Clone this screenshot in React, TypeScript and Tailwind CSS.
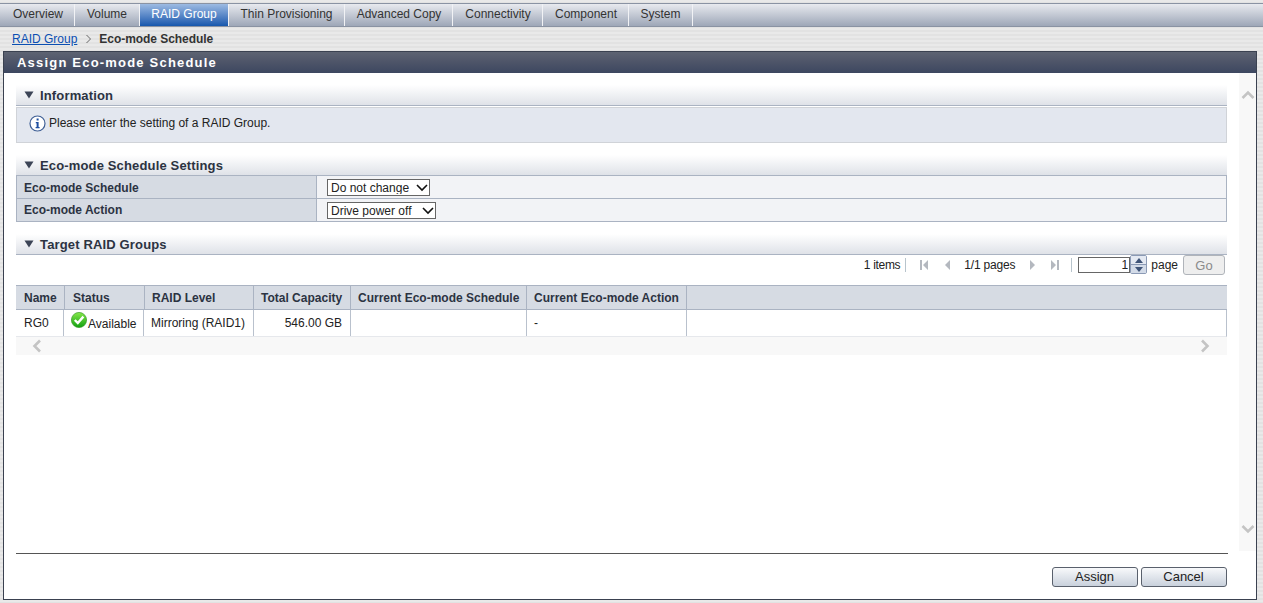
const tabs = [
  { label: 'Overview', width: 'w-[75px] pl-[2px]' },
  { label: 'Volume', width: 'w-[65px]' },
  { label: 'RAID Group', width: 'w-[89px]', active: true },
  { label: 'Thin Provisioning', width: 'w-[116px]' },
  { label: 'Advanced Copy', width: 'w-[108px] pl-[1px]' },
  { label: 'Connectivity', width: 'w-[90px] pl-[1px]' },
  { label: 'Component', width: 'w-[86px] pl-[1px]' },
  { label: 'System', width: 'w-[64px]' },
];

function SectionHeader({ title }: { title: string }) {
  return (
    <div className="flex h-[21px] items-center gap-[6px] border-b border-[#aab3c2] bg-gradient-to-b from-white to-[#dfe2e8] pl-[8px] pt-[1px]">
      <svg width="10" height="8" viewBox="0 0 10 8" className="mt-[-1px]">
        <path d="M0.5 0.5h9L5 7.5z" fill="#3c4456" />
      </svg>
      <span className="text-[13px] font-bold tracking-[0.15px] text-[#2c3342]">{title}</span>
    </div>
  );
}

function InfoIcon() {
  return (
    <svg width="17" height="17" viewBox="0 0 17 17">
      <circle cx="8.5" cy="8.5" r="7.5" fill="#fff" stroke="#3f5f95" strokeWidth="1.2" />
      <rect x="7.6" y="3.5" width="2" height="2" fill="#1f4fa0" />
      <path d="M6.8 7h2.8v5h1v1.2H6.6V12h1V8.2h-.8z" fill="#1f4fa0" />
    </svg>
  );
}

function CheckBadge() {
  return (
    <svg width="16" height="16" viewBox="0 0 16 16" className="mt-[-6px] shrink-0">
      <defs>
        <linearGradient id="ok" x1="0" y1="0" x2="0" y2="1">
          <stop offset="0" stopColor="#86e84a" />
          <stop offset="1" stopColor="#10a010" />
        </linearGradient>
      </defs>
      <circle cx="8" cy="8" r="7.6" fill="url(#ok)" stroke="#3a9a2a" strokeWidth="0.7" />
      <path d="M3.8 8l3 3 5.6-6.4" fill="none" stroke="#fff" strokeWidth="2.4" />
    </svg>
  );
}

function PagerIcon({ d }: { d: string }) {
  return (
    <svg width="10" height="10" viewBox="0 0 10 10">
      <path d={d} fill="#b4b8bf" />
    </svg>
  );
}

function Chevron({ d }: { d: string }) {
  return (
    <svg width="14" height="14" viewBox="0 0 14 14">
      <path d={d} fill="none" stroke="#c4c4c4" strokeWidth="2.6" />
    </svg>
  );
}

function SelectBox({ value, width }: { value: string; width: string }) {
  return (
    <div className={`relative h-[17px] ${width}`}>
      <select className="h-full w-full appearance-none border border-[#666] bg-white pl-[3px] text-[12px] leading-none text-[#222]">
        <option>{value}</option>
      </select>
      <svg width="12" height="8" viewBox="0 0 12 8" className="pointer-events-none absolute right-[2px] top-[5px]">
        <path d="M1 1l5 5 5-5" fill="none" stroke="#111" strokeWidth="1.6" />
      </svg>
    </div>
  );
}

function FooterButton({ label }: { label: string }) {
  return (
    <button className="h-[20px] w-[86px] rounded-[3px] border border-[#59606c] bg-gradient-to-b from-[#f8f9fb] to-[#c9d1dc] pb-[1px] pr-[1px] text-[13px] leading-none text-[#222]">
      {label}
    </button>
  );
}

const headCell = 'flex items-center whitespace-nowrap border-r border-[#aab3c2] font-bold text-[#2c3342]';
const bodyCell = 'flex items-center whitespace-nowrap border-r border-[#b9c1cd] text-[#222]';
const labelCell = 'flex w-[300px] items-center border-r border-[#aab3c2] bg-[#d6dbe3] pl-[7px] font-bold text-[#2c3342]';

export default function App() {
  return (
    <div className="flex h-[603px] w-[1263px] flex-col overflow-hidden bg-[repeating-linear-gradient(to_bottom,#e9e9e9_0px,#e9e9e9_2px,#e2e2e2_2px,#e2e2e2_4px)] font-['Liberation_Sans',Arial,sans-serif] text-[12px]">
      {/* tabs */}
      <div className="mt-[3px] flex h-[24px] border-y border-[#8a93a3] bg-gradient-to-b from-[#e8eaef] to-[#9ea7b8]">
        {tabs.map((tab) => (
          <div
            key={tab.label}
            className={`flex items-center justify-center border-r border-[#f1f2f5] pb-[2px] ${tab.width} ${
              tab.active
                ? 'bg-gradient-to-b from-[#9dbbe2] to-[#1557ad] text-white'
                : 'text-[#333]'
            }`}
          >
            {tab.label}
          </div>
        ))}
      </div>

      {/* breadcrumb */}
      <div className="flex h-[24px] items-center pb-[1px] pl-[12px]">
        <span className="text-[#0b4fb3] underline">RAID Group</span>
        <svg width="8" height="10" viewBox="0 0 8 10" className="ml-[8px] mr-[6px]">
          <path d="M1.5 1l4 4-4 4" fill="none" stroke="#666" />
        </svg>
        <span className="font-bold tracking-[-0.05px] text-[#333]">Eco-mode Schedule</span>
      </div>

      {/* panel */}
      <div className="ml-[3px] flex h-[549px] w-[1254px] flex-col border border-[#3a4150] bg-white">
        <div className="flex h-[21px] shrink-0 items-center bg-gradient-to-b from-[#5d6372] via-[#4d5468] to-[#3d4760] pl-[13px] text-[13px] font-bold tracking-[1.2px] text-white">
          Assign Eco-mode Schedule
        </div>

        <div className="flex h-[478px] shrink-0">
          <div className="ml-[12px] w-[1211px] pt-[12px]">
            <SectionHeader title="Information" />
            <div className="mt-[1px] flex h-[36px] items-center gap-[3px] border border-[#d0d3d8] bg-[#e3e7ef] pb-[4px] pl-[12px] text-[#222]">
              <InfoIcon />
              Please enter the setting of a RAID Group.
            </div>

            <div className="mt-[12px]">
              <SectionHeader title="Eco-mode Schedule Settings" />
            </div>
            <div className="border-x border-[#aab3c2]">
              <div className="flex h-[23px] border-b border-[#aab3c2]">
                <div className={`${labelCell} pt-[1px]`}>Eco-mode Schedule</div>
                <div className="flex flex-1 items-center bg-[#f2f3f6] pl-[10px]">
                  <SelectBox value="Do not change" width="w-[103px]" />
                </div>
              </div>
              <div className="flex h-[23px] border-b border-[#aab3c2]">
                <div className={labelCell}>Eco-mode Action</div>
                <div className="flex flex-1 items-center bg-[#f2f3f6] pl-[10px]">
                  <SelectBox value="Drive power off" width="w-[109px]" />
                </div>
              </div>
            </div>

            <div className="mt-[12px]">
              <SectionHeader title="Target RAID Groups" />
            </div>

            {/* pager */}
            <div className="flex h-[30px] items-start justify-end pr-[2px] text-[#222]">
              <span className="mt-[1px] tracking-[-0.3px]">1 items</span>
              <span className="ml-[5px] mt-[3px] h-[14px] w-px bg-[#b8c4cc]" />
              <div className="ml-[13px] mt-[1px] flex h-[18px] w-[141px] items-center justify-between">
                <PagerIcon d="M1 0h2v10H1zM9 0v10L4 5z" />
                <PagerIcon d="M8 0v10L3 5z" />
                <span className="tracking-[-0.2px]">1/1 pages</span>
                <PagerIcon d="M2 0v10l5-5z" />
                <PagerIcon d="M1 0v10l5-5zM7 0h2v10H7z" />
              </div>
              <span className="ml-[11px] mt-[3px] h-[14px] w-px bg-[#b8c4cc]" />
              <input
                readOnly
                value="1"
                className="ml-[6px] mt-[2px] h-[16px] w-[52px] border border-[#666] bg-white pr-[1px] text-right text-[12px] text-[#222]"
              />
              <div className="flex h-[19px] w-[17px] flex-col overflow-hidden rounded-[2px] border border-[#8b9ab5]">
                <div className="flex flex-1 items-center justify-center bg-[#e4e9f2]">
                  <svg width="8" height="5" viewBox="0 0 8 5"><path d="M4 0l4 5H0z" fill="#3f5478" /></svg>
                </div>
                <div className="flex flex-1 items-center justify-center border-t border-[#8b9ab5] bg-[#d3dbe8]">
                  <svg width="8" height="5" viewBox="0 0 8 5"><path d="M0 0h8L4 5z" fill="#3f5478" /></svg>
                </div>
              </div>
              <span className="ml-[4px] mt-[1px]">page</span>
              <button className="ml-[5px] h-[20px] w-[42px] rounded-[3px] border border-[#b0b4ba] bg-[#eeeeee] text-[13px] leading-none text-[#8a8a8a]">
                Go
              </button>
            </div>

            {/* table */}
            <div className="flex h-[25px] border-y border-[#aab3c2] bg-[#d6dbe3]">
              <div className={`${headCell} w-[49px] pl-[8px]`}>Name</div>
              <div className={`${headCell} w-[80px] pl-[8px]`}>Status</div>
              <div className={`${headCell} w-[109px] pl-[7px]`}>RAID Level</div>
              <div className={`${headCell} w-[97px] pl-[7px]`}>Total Capacity</div>
              <div className={`${headCell} w-[176px] pl-[7px]`}>Current Eco-mode Schedule</div>
              <div className={`${headCell} w-[160px] pl-[7px]`}>Current Eco-mode Action</div>
            </div>
            <div className="flex h-[27px] border-b border-r border-[#e6e8ec] border-r-[#b9c1cd]">
              <div className={`${bodyCell} w-[48px] pl-[8px]`}>RG0</div>
              <div className={`${bodyCell} w-[80px] pl-[7px]`}>
                <CheckBadge />
                <span className="ml-[1px] mt-[2px]">Available</span>
              </div>
              <div className={`${bodyCell} w-[110px] pl-[7px]`}>Mirroring (RAID1)</div>
              <div className={`${bodyCell} w-[97px] justify-end pr-[8px]`}>546.00 GB</div>
              <div className={`${bodyCell} w-[176px]`} />
              <div className={`${bodyCell} w-[160px] pl-[7px]`}>-</div>
            </div>
            <div className="flex h-[18px] items-center justify-between bg-[#f8f8f8] pl-[14px] pr-[15px]">
              <Chevron d="M10 1.5L4.5 7l5.5 5.5" />
              <Chevron d="M4 1.5L9.5 7 4 12.5" />
            </div>
          </div>

          {/* vertical scroll rail */}
          <div className="ml-[12px] flex w-[17px] flex-col items-center justify-between bg-[#f8f8f8] py-[15px]">
            <Chevron d="M1.5 10L7 4.5l5.5 5.5" />
            <Chevron d="M1.5 4L7 9.5 12.5 4" />
          </div>
        </div>

        {/* footer */}
        <div className="ml-[12px] mt-[2px] w-[1212px] border-t border-[#555]">
          <div className="mr-[1px] mt-[13px] flex justify-end gap-[3px]">
            <FooterButton label="Assign" />
            <FooterButton label="Cancel" />
          </div>
        </div>
      </div>
    </div>
  );
}
